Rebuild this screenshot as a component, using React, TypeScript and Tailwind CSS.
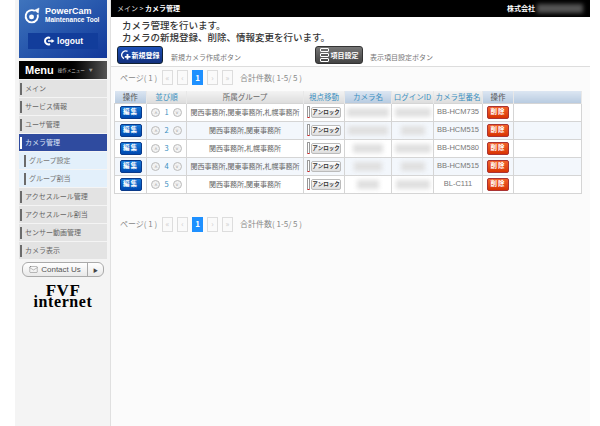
import React from 'react';
import { Mail } from 'lucide-react';

const font = 'font-["Noto_Sans_CJK_JP","Liberation_Sans",sans-serif]';

const menu = [
  { label: 'メイン' },
  { label: 'サービス情報' },
  { label: 'ユーザ管理' },
  { label: 'カメラ管理', active: true },
  { label: 'グループ設定', sub: true },
  { label: 'グループ割当', sub: true },
  { label: 'アクセスルール管理' },
  { label: 'アクセスルール割当' },
  { label: 'センサー動画管理' },
  { label: 'カメラ表示' }
];

const rows = [
  { no: 1, group: '関西事務所,関東事務所,札幌事務所', name: 42, login: 36, model: 'BB-HCM735' },
  { no: 2, group: '関西事務所,関東事務所', name: 40, login: 24, model: 'BB-HCM515' },
  { no: 3, group: '関西事務所,札幌事務所', name: 30, login: 36, model: 'BB-HCM580' },
  { no: 4, group: '関西事務所,関東事務所,札幌事務所', name: 28, login: 24, model: 'BB-HCM515' },
  { no: 5, group: '関西事務所,関東事務所', name: 22, login: 34, model: 'BL-C111' }
];

const Sidebar: React.FC = () => (
  <aside className="w-[95px] shrink-0 bg-[#f4f4f4] pl-[4px] pr-[3px] flex flex-col">
    <div className="h-[58px] bg-linear-to-br from-[#3f74bd] to-[#12379a] flex flex-col items-center text-white">
      <div className="flex items-center gap-[4px] w-full pl-[5px] pt-[6px]">
        <svg width="17" height="17" viewBox="0 0 18 18" fill="none" stroke="white">
          <path d="M11.5 4.2 A6.5 6.5 0 1 0 14.5 8" strokeWidth="2" />
          <circle cx="8" cy="10.5" r="2.6" fill="white" stroke="none" />
          <path d="M11 3.5 L16 1 L15.2 6.5 Z" fill="white" strokeWidth="0.5" />
        </svg>
        <div className="flex flex-col font-['Liberation_Sans',sans-serif] font-bold">
          <span className="text-[9px] leading-[10px]">PowerCam</span>
          <span className="text-[6.5px] leading-[8px] whitespace-nowrap">Maintenance Tool</span>
        </div>
      </div>
      <div className="mt-[9px] w-[70px] h-[16px] bg-[#123d9b] flex items-center justify-center gap-[2px]">
        <svg width="12" height="10" viewBox="0 0 12 10" fill="none" stroke="white">
          <path d="M7 2 A3.4 3.4 0 1 0 7 8" strokeWidth="2" />
          <path d="M5 5 H9" strokeWidth="1.5" />
          <path d="M8.5 3 L11.5 5 L8.5 7 Z" fill="white" stroke="none" />
        </svg>
        <span className="font-['Liberation_Sans',sans-serif] font-bold text-[8.5px]">logout</span>
      </div>
    </div>
    <div className="mt-[3px] h-[18px] bg-linear-to-r from-black via-black to-[#555] text-white flex items-center pl-[6px] gap-[4px]">
      <span className="font-['Liberation_Sans',sans-serif] font-bold text-[11px]">Menu</span>
      <span className={`${font} text-[4.5px] text-[#ccc] whitespace-nowrap`}>操作メニュー</span>
      <span className="text-[4px] text-[#999]">▼</span>
    </div>
    <nav className="mt-[1px] flex flex-col gap-px">
      {menu.map((m) => (
        <div
          key={m.label}
          className={`h-[17px] flex items-center ${font} text-[7px] whitespace-nowrap ${
            m.active ? 'bg-[#2f4b9f] text-[#dfe6f7]' : m.sub ? 'bg-[#e3f0fb] text-[#777]' : 'bg-[#e3e3e3] text-[#666]'
          } ${m.sub ? 'pl-[5px]' : 'pl-px'}`}
        >
          <span className={`w-[2px] h-[12px] mr-[3px] ${m.active ? 'bg-white' : 'bg-[#6b6b6b]'}`} />
          {m.label}
        </div>
      ))}
    </nav>
    <div className="mt-[3px] mx-[3px] h-[15px] rounded-[6px] border border-[#aaa] bg-linear-to-b from-white to-[#e9e9e9] flex items-center">
      <div className="flex-1 flex items-center justify-center gap-[3px] font-['Liberation_Sans',sans-serif] text-[8px] text-[#555]">
        <Mail size={9} strokeWidth={1} />
        Contact Us
      </div>
      <div className="w-[16px] h-full border-l border-[#aaa] flex items-center justify-center text-[5px] text-[#444]">▶</div>
    </div>
    <div className="mt-[8px] flex flex-col items-center font-['Liberation_Serif',serif] font-bold text-black">
      <span className="h-[12px] text-[17px] leading-[12px] tracking-[0.5px]">FVF</span>
      <span className="h-[10px] text-[16px] leading-[10px] tracking-[0.6px]">internet</span>
    </div>
  </aside>
);

const Pager: React.FC = () => (
  <div className={`flex items-center h-[15px] ${font} text-[8px] text-[#888] whitespace-nowrap`}>
    <span className="w-[48px] pl-[6px]">ページ( 1 )</span>
    <div className="flex items-center gap-[4px]">
      {['«', '‹', '1', '›', '»'].map((c, i) => (
        <span
          key={i}
          className={`w-[11px] h-[15px] flex items-center justify-center border ${
            c === '1' ? 'bg-[#1e90ff] border-[#1e90ff] text-white font-bold' : 'border-[#ddd] bg-[#fafafa] text-[#ccc]'
          }`}
        >
          {c}
        </span>
      ))}
    </div>
    <span className="ml-[7px]">合計件数( 1-5/ 5 )</span>
  </div>
);

const Blur: React.FC<{ w: number }> = ({ w }) => (
  <div className="h-[9px] mx-auto bg-[#e0e0e0] blur-[2px]" style={{ width: w }} />
);

const Btn: React.FC<{ label: string; red?: boolean }> = ({ label, red }) => (
  <span
    className={`inline-flex w-[22px] h-[13px] rounded-[2px] items-center justify-center text-white font-bold text-[6.5px] tracking-[1px] ${
      red ? 'bg-linear-to-b from-[#f2622a] to-[#d93200] border border-[#a33]' : 'bg-linear-to-b from-[#1878d8] to-[#0048b0] border border-[#0a3a8a]'
    }`}
  >
    {label}
  </span>
);

const Circle: React.FC<{ up?: boolean }> = ({ up }) => (
  <span className="w-[9px] h-[9px] rounded-full border border-[#bbb] bg-[#f2f2f2] flex items-center justify-center text-[5px] leading-none text-[#999]">
    {up ? '˄' : '˅'}
  </span>
);

const th = 'h-[12px] border-r border-[#e8e8e8] font-normal text-[7.5px] p-0 whitespace-nowrap';
const td = 'h-[18px] border border-[#d5d5d5] p-0 text-center';

const App: React.FC = () => (
  <div className={`w-[600px] h-[426px] overflow-hidden bg-white flex pl-[15px] pr-[10px] ${font}`}>
    <Sidebar />
    <main className="w-[480px] border-l border-[#e0e0e0] bg-[#fbfbfb] flex flex-col">
      <div className="h-[17px] bg-black text-white flex items-center justify-between text-[7px]">
        <div className="pl-[6px]">
          <span className="text-[#ddd]">メイン &gt; </span>
          <span className="font-bold">カメラ管理</span>
        </div>
        <div className="flex items-center pr-[7px] font-bold">
          株式会社
          <span className="w-[46px] h-[9px] ml-[2px] bg-[#555] blur-[2px]" />
        </div>
      </div>
      <div className="border-b border-[#ddd] bg-white h-[50px] pl-[6px]">
        <p className="pl-[5px] pt-[3px] h-[26px] text-[9.5px] leading-[11.5px] text-[#333] font-medium">
          カメラ管理を行います。
          <br />
          カメラの新規登録、削除、情報変更を行います。
        </p>
        <div className="flex items-center mt-[3px] h-[18px]">
          <div className="w-[46px] h-[18px] rounded-[3px] bg-linear-to-b from-[#1c50b8] to-[#12307e] border border-[#123] flex items-center justify-center gap-px text-white font-bold text-[7px]">
            <svg width="10" height="10" viewBox="0 0 10 10" fill="none" stroke="white">
              <path d="M6.5 1.3 A4 4 0 1 0 3 8.6" strokeWidth="1.4" />
              <path d="M6.5 4 V9.5 M3.8 6.8 H9.5" strokeWidth="1.8" />
            </svg>
            新規登録
          </div>
          <span className="ml-[8px] text-[7px] text-[#777] mt-[4px]">新規カメラ作成ボタン</span>
          <div className="ml-[74px] w-[48px] h-[18px] rounded-[3px] bg-linear-to-b from-[#777] to-[#444] border border-[#333] flex items-center justify-center gap-[2px] text-white font-bold text-[7px]">
            <span className="flex flex-col gap-px">
              <span className="block w-[9px] h-[4px] border border-white rounded-[1px]" />
              <span className="block w-[9px] h-[4px] border border-white rounded-[1px]" />
              <span className="block w-[9px] h-[4px] border border-white rounded-[1px]" />
            </span>
            項目設定
          </div>
          <span className="ml-[7px] text-[7px] text-[#777] mt-[4px]">表示項目設定ボタン</span>
        </div>
      </div>
      <div className="mt-[3px] pl-[3px]">
        <Pager />
      </div>
      <div className="px-[3px] mt-[6px]">
        <table className="w-[468px] table-fixed border-collapse bg-white text-[7.5px] text-[#666]">
          <colgroup>
            <col className="w-[32px]" />
            <col className="w-[40px]" />
            <col className="w-[117px]" />
            <col className="w-[41px]" />
            <col className="w-[47px]" />
            <col className="w-[42px]" />
            <col className="w-[49px]" />
            <col className="w-[31px]" />
            <col />
          </colgroup>
          <thead>
            <tr>
              <th className={`${th} bg-linear-to-b from-[#dce6f2] to-[#b8cbe0] text-[#555]`}>操作</th>
              <th className={`${th} bg-linear-to-b from-[#f3f3f3] to-[#ddd] text-[#3a8fc0]`}>並び順</th>
              <th className={`${th} bg-linear-to-b from-[#f3f3f3] to-[#ddd] text-[#666]`}>所属グループ</th>
              <th className={`${th} bg-linear-to-b from-[#f3f3f3] to-[#ddd] text-[#3a8fc0]`}>視点移動</th>
              <th className={`${th} bg-linear-to-b from-[#dce6f2] to-[#b8cbe0] text-[#3a8fc0]`}>カメラ名</th>
              <th className={`${th} bg-linear-to-b from-[#f3f3f3] to-[#ddd] text-[#3a8fc0]`}>ログインID</th>
              <th className={`${th} bg-linear-to-b from-[#f3f3f3] to-[#ddd] text-[#3a8fc0]`}>カメラ型番名</th>
              <th className={`${th} bg-linear-to-b from-[#dce6f2] to-[#b8cbe0] text-[#555]`}>操作</th>
              <th className={`${th} bg-linear-to-b from-[#dce6f2] to-[#b8cbe0]`} />
            </tr>
          </thead>
          <tbody>
            {rows.map((r) => (
              <tr key={r.no} className={r.no % 2 === 0 ? 'bg-[#f3f7fc]' : 'bg-white'}>
                <td className={td}><Btn label="編集" /></td>
                <td className={td}>
                  <div className="flex items-center justify-center gap-[4px] text-[#3a8fc0]">
                    <Circle up />
                    {r.no}
                    <Circle />
                  </div>
                </td>
                <td className={`${td} text-[7px] whitespace-nowrap`}>{r.group}</td>
                <td className={td}>
                  <div className="flex items-center justify-center gap-px">
                    <span className="w-[3px] h-[12px] rounded-[1px] border border-[#999] border-b-[#d22] bg-white" />
                    <span className="w-[30px] h-[11px] rounded-[2px] border border-[#bbb] bg-linear-to-b from-white to-[#ddd] text-[#333] text-[5.5px] font-bold flex items-center justify-center">アンロック</span>
                  </div>
                </td>
                <td className={td}><Blur w={r.name} /></td>
                <td className={td}><Blur w={r.login} /></td>
                <td className={`${td} font-['Liberation_Sans',sans-serif] font-normal text-[#777]`}>{r.model}</td>
                <td className={td}><Btn label="削除" red /></td>
                <td className={td} />
              </tr>
            ))}
          </tbody>
        </table>
      </div>
      <div className="mt-[23px] pl-[3px]">
        <Pager />
      </div>
    </main>
  </div>
);

export default App;
